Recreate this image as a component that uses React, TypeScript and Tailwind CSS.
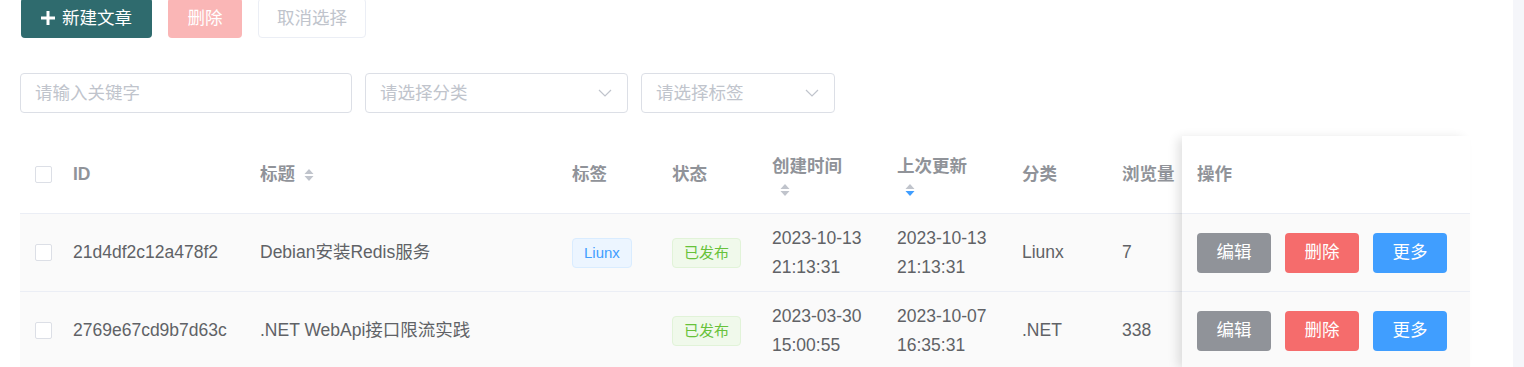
import type { ReactNode } from "react";

const font = "font-['Liberation_Sans','Noto_Sans_CJK_SC',sans-serif]";

type Row = {
  id: string;
  title: string;
  tag?: string;
  created: [string, string];
  updated: [string, string];
  category: string;
  views: string;
};

const rows: Row[] = [
  {
    id: "21d4df2c12a478f2",
    title: "Debian安装Redis服务",
    tag: "Liunx",
    created: ["2023-10-13", "21:13:31"],
    updated: ["2023-10-13", "21:13:31"],
    category: "Liunx",
    views: "7"
  },
  {
    id: "2769e67cd9b7d63c",
    title: ".NET WebApi接口限流实践",
    created: ["2023-03-30", "15:00:55"],
    updated: ["2023-10-07", "16:35:31"],
    category: ".NET",
    views: "338"
  }
];

function Caret({ active }: { active?: "asc" | "desc" }) {
  return (
    <svg width="10" height="14" viewBox="0 0 10 14" className="inline-block">
      <path d="M5 1 L9.5 6 H0.5 Z" fill={active === "asc" ? "#409eff" : "#c0c4cc"} />
      <path d="M5 13 L9.5 8 H0.5 Z" fill={active === "desc" ? "#409eff" : "#c0c4cc"} />
    </svg>
  );
}

function Checkbox() {
  return <span className="block h-[17px] w-[17px] rounded-[2px] border border-[#dcdfe6] bg-white" />;
}

function Chevron() {
  return (
    <svg width="14" height="8" viewBox="0 0 14 8" fill="none">
      <path d="M1 1 L7 7 L13 1" stroke="#c0c4cc" strokeWidth="1.2" />
    </svg>
  );
}

function Cell({ w, children, className = "" }: { w: string; children?: ReactNode; className?: string }) {
  return <div className={`flex shrink-0 items-center ${w} ${className}`}>{children}</div>;
}

function OpButton({ label, color }: { label: string; color: string }) {
  return (
    <button className={`h-[40px] w-[74px] rounded-[4px] text-[17.5px] text-white ${color}`}>{label}</button>
  );
}

export default function App() {
  return (
    <div className={`flex h-[367px] w-full overflow-hidden bg-white ${font}`}>
      <div className="flex-1 overflow-hidden">
        {/* toolbar */}
        <div className="-mt-[2px] ml-[21px] flex gap-4">
          <button className="flex h-[40px] w-[131px] items-center justify-center gap-[7px] rounded-[4px] bg-[#2f6b6e] text-[17.5px] text-white">
            <svg width="14" height="14" viewBox="0 0 14 14">
              <path d="M5.5 0 H8.5 V5.5 H14 V8.5 H8.5 V14 H5.5 V8.5 H0 V5.5 H5.5 Z" fill="white" />
            </svg>
            新建文章
          </button>
          <button className="h-[40px] w-[74px] rounded-[4px] bg-[#fab6b6] text-[17.5px] text-white">删除</button>
          <button className="h-[40px] w-[108px] rounded-[4px] border border-[#ebeef5] bg-white text-[17.5px] text-[#c0c4cc]">
            取消选择
          </button>
        </div>

        {/* filters */}
        <div className="ml-[20px] mt-[35px] flex gap-[13px]">
          <div className="flex h-[40px] w-[332px] items-center rounded-[4px] border border-[#dcdfe6] pl-[14px] text-[17.5px] text-[#c0c4cc]">
            请输入关键字
          </div>
          <div className="flex h-[40px] w-[263px] items-center justify-between rounded-[4px] border border-[#dcdfe6] pl-[14px] pr-[15px] text-[17.5px] text-[#c0c4cc]">
            请选择分类
            <Chevron />
          </div>
          <div className="flex h-[40px] w-[194px] items-center justify-between rounded-[4px] border border-[#dcdfe6] pl-[14px] pr-[15px] text-[17.5px] text-[#c0c4cc]">
            请选择标签
            <Chevron />
          </div>
        </div>

        {/* table */}
        <div className="ml-[20px] mt-[23px] flex w-[1450px] text-[17.5px] leading-[29px]">
          <div className="w-[1162px] shrink-0">
            <div className="flex h-[78px] border-b border-[#ebeef5] bg-white font-bold text-[#909399]">
              <Cell w="w-[53px]" className="pl-[15px]">
                <Checkbox />
              </Cell>
              <Cell w="w-[187px]">ID</Cell>
              <Cell w="w-[312px]" className="gap-[9px]">
                标题
                <Caret />
              </Cell>
              <Cell w="w-[100px]">标签</Cell>
              <Cell w="w-[100px]">状态</Cell>
              <Cell w="w-[125px]" className="flex-col !items-start justify-center">
                <span>创建时间</span>
                <span className="-mt-[1px] pl-[8px] leading-[16px]">
                  <Caret />
                </span>
              </Cell>
              <Cell w="w-[125px]" className="flex-col !items-start justify-center">
                <span>上次更新</span>
                <span className="-mt-[1px] pl-[8px] leading-[16px]">
                  <Caret active="desc" />
                </span>
              </Cell>
              <Cell w="w-[100px]">分类</Cell>
              <Cell w="w-[60px]" className="overflow-hidden whitespace-nowrap">
                浏览量
              </Cell>
            </div>

            {rows.map((r) => (
              <div key={r.id} className="flex h-[78px] border-b border-[#ebeef5] bg-[#fafafa] text-[#606266]">
                <Cell w="w-[53px]" className="pl-[15px]">
                  <Checkbox />
                </Cell>
                <Cell w="w-[187px]">{r.id}</Cell>
                <Cell w="w-[312px]">{r.title}</Cell>
                <Cell w="w-[100px]">
                  {r.tag && (
                    <span className="flex h-[30px] items-center rounded-[4px] border border-[#d9ecff] bg-[#ecf5ff] px-[11px] text-[15px] text-[#409eff]">
                      {r.tag}
                    </span>
                  )}
                </Cell>
                <Cell w="w-[100px]">
                  <span className="flex h-[30px] items-center rounded-[4px] border border-[#e1f3d8] bg-[#f0f9eb] px-[11px] text-[15px] text-[#67c23a]">
                    已发布
                  </span>
                </Cell>
                <Cell w="w-[125px]" className="flex-col !items-start justify-center">
                  <span>{r.created[0]}</span>
                  <span>{r.created[1]}</span>
                </Cell>
                <Cell w="w-[125px]" className="flex-col !items-start justify-center">
                  <span>{r.updated[0]}</span>
                  <span>{r.updated[1]}</span>
                </Cell>
                <Cell w="w-[100px]">{r.category}</Cell>
                <Cell w="w-[60px]">{r.views}</Cell>
              </div>
            ))}
          </div>

          {/* fixed right column */}
          <div className="relative z-10 flex-1 bg-white shadow-[-6px_0_10px_-2px_rgba(0,0,0,0.12)]">
            <div className="flex h-[78px] items-center border-b border-[#ebeef5] pl-[15px] font-bold text-[#909399]">
              操作
            </div>
            {rows.map((r) => (
              <div key={r.id} className="flex h-[78px] items-center gap-[14px] border-b border-[#ebeef5] bg-[#fafafa] pl-[15px]">
                <OpButton label="编辑" color="bg-[#909399]" />
                <OpButton label="删除" color="bg-[#f56c6c]" />
                <OpButton label="更多" color="bg-[#409eff]" />
              </div>
            ))}
          </div>
        </div>
      </div>
      <div className="w-[11px] shrink-0 bg-[#f5f6fa]" />
    </div>
  );
}
